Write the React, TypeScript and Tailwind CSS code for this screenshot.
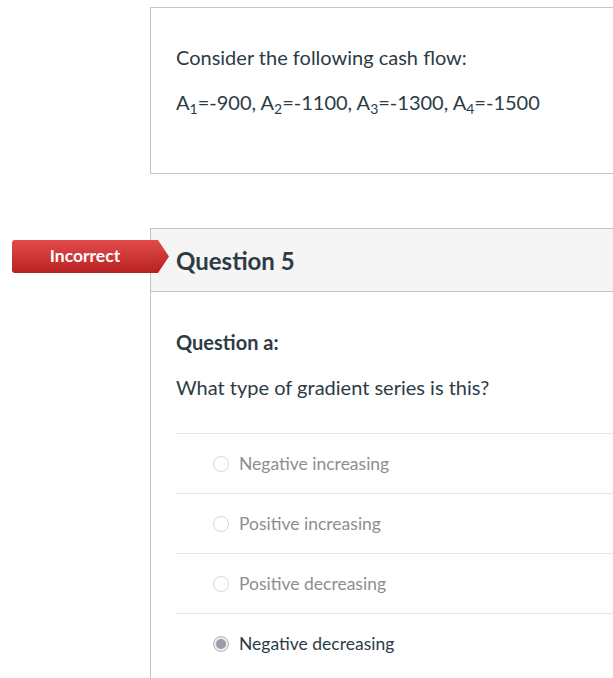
const answers = [
  { label: 'Negative increasing', selected: false },
  { label: 'Positive increasing', selected: false },
  { label: 'Positive decreasing', selected: false },
  { label: 'Negative decreasing', selected: true }
]

const Radio = ({ selected }: { selected: boolean }) =>
  selected ? (
    <span className="flex h-[16px] w-[16px] items-center justify-center rounded-full border border-[#b5b5bd] bg-[#ececef]">
      <span className="h-[10px] w-[10px] rounded-full bg-[#9c9ca6]" />
    </span>
  ) : (
    <span className="h-[16px] w-[16px] rounded-full border border-[#d9d9d9] bg-white" />
  )

export default function App() {
  return (
    <div
      className="
        relative
        h-[678px]
        w-[613px]
        overflow-hidden
        bg-white
        text-[#2d3b45]
      "
      style={{ fontFamily: 'Lato, "Open Sans", sans-serif' }}
    >
      <div className="pt-[7px] pl-[150px]">
        <div
          className="
            h-[167px]
            w-[480px]
            border
            border-[#c4c4c4]
            pt-[34px]
            pl-[25px]
            text-[20px]
          "
        >
          <p className="leading-[30px]">Consider the following cash flow:</p>
          <p className="mt-[15px] leading-[30px]">
            A<sub className="text-[14px]">1</sub>=-900, A<sub className="text-[14px]">2</sub>=-1100, A
            <sub className="text-[14px]">3</sub>=-1300, A<sub className="text-[14px]">4</sub>=-1500
          </p>
        </div>

        <div className="mt-[54px] h-[460px] w-[480px] border-t border-l border-[#c4c4c4]">
          <div className="flex h-[63px] items-center border-b border-[#c4c4c4] bg-[#f5f5f5] pl-[25px]">
            <h2 className="pt-[2px] text-[24px] font-bold">Question 5</h2>
          </div>

          <div className="pt-[35px] pl-[25px]">
            <p className="text-[20px] font-bold leading-[30px]">Question a:</p>
            <p className="mt-[15px] text-[20px] leading-[30px]">What type of gradient series is this?</p>

            <div className="mt-[31px]">
              {answers.map((a) => (
                <div
                  key={a.label}
                  className="flex h-[60px] items-center gap-[10px] border-t border-[#e6e6e6] pl-[37px] pt-[1px]"
                >
                  <Radio selected={a.selected} />
                  <span className={a.selected ? 'text-[17.5px] text-[#2d3b45]' : 'text-[17.5px] text-[#8e8e8e]'}>
                    {a.label}
                  </span>
                </div>
              ))}
            </div>
          </div>
        </div>
      </div>

      <div className="absolute top-[240px] left-[12px] flex h-[33px]">
        <div
          className="
            flex
            w-[146px]
            items-center
            justify-center
            rounded-l-[3px]
            bg-gradient-to-b
            from-[#e34b4b]
            to-[#b82020]
            text-[17.5px]
            font-bold
            text-white
          "
        >
          Incorrect
        </div>
        <svg width="11" height="33" viewBox="0 0 11 33">
          <defs>
            <linearGradient id="g" x1="0" y1="0" x2="0" y2="1">
              <stop offset="0" stopColor="#e34b4b" />
              <stop offset="1" stopColor="#b82020" />
            </linearGradient>
          </defs>
          <polygon points="0,0 11,16.5 0,33" fill="url(#g)" />
        </svg>
      </div>
    </div>
  )
}
